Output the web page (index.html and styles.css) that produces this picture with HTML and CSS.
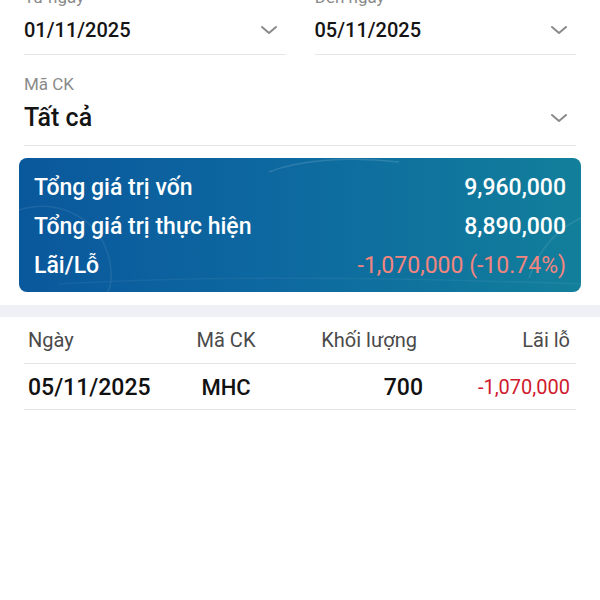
FILE: index.html
```html
<!DOCTYPE html>
<html lang="vi">
<head>
<meta charset="utf-8">
<link rel="stylesheet" href="styles.css">
</head>
<body>
<div class="page">
  <div class="filters">
    <div class="row2">
      <div class="field">
        <div class="label">Từ ngày</div>
        <div class="control">
          <span class="value">01/11/2025</span>
          <svg class="chev" width="18" height="10" viewBox="0 0 18 10"><path d="M2 2l7 6 7-6" fill="none" stroke="#8a8a8a" stroke-width="2" stroke-linecap="round" stroke-linejoin="round"/></svg>
        </div>
      </div>
      <div class="field">
        <div class="label">Đến ngày</div>
        <div class="control">
          <span class="value">05/11/2025</span>
          <svg class="chev" width="18" height="10" viewBox="0 0 18 10"><path d="M2 2l7 6 7-6" fill="none" stroke="#8a8a8a" stroke-width="2" stroke-linecap="round" stroke-linejoin="round"/></svg>
        </div>
      </div>
    </div>
    <div class="field full">
      <div class="label">Mã CK</div>
      <div class="control big">
        <span class="value">Tất cả</span>
        <svg class="chev" width="18" height="10" viewBox="0 0 18 10"><path d="M2 2l7 6 7-6" fill="none" stroke="#8a8a8a" stroke-width="2" stroke-linecap="round" stroke-linejoin="round"/></svg>
      </div>
    </div>
  </div>

  <div class="card">
    <svg class="deco" width="562" height="134" viewBox="0 0 562 134">
      <path d="M250 14 C280 2 330 -2 380 4" fill="none" stroke="#ffffff" stroke-opacity="0.13" stroke-width="1.5"/>
      <path d="M0 52 C40 40 80 60 90 100 C95 120 90 134 88 134" fill="none" stroke="#ffffff" stroke-opacity="0.08" stroke-width="1.5"/>
      <path d="M562 60 C540 70 520 90 510 120" fill="none" stroke="#ffffff" stroke-opacity="0.1" stroke-width="1.5"/>
      <path d="M40 126 C180 118 340 118 562 126" fill="none" stroke="#ffffff" stroke-opacity="0.05" stroke-width="1.5"/>
    </svg>
    <div class="crow"><span>Tổng giá trị vốn</span><span>9,960,000</span></div>
    <div class="crow"><span>Tổng giá trị thực hiện</span><span>8,890,000</span></div>
    <div class="crow"><span>Lãi/Lỗ</span><span class="loss">-1,070,000 (-10.74%)</span></div>
  </div>

  <div class="band"></div>

  <div class="table">
    <div class="trow head">
      <span class="c1">Ngày</span>
      <span class="c2">Mã CK</span>
      <span class="c3">Khối lượng</span>
      <span class="c4">Lãi lỗ</span>
    </div>
    <div class="trow body">
      <span class="c1">05/11/2025</span>
      <span class="c2">MHC</span>
      <span class="c3">700</span>
      <span class="c4 red">-1,070,000</span>
    </div>
  </div>
</div>
</body>
</html>
```

FILE: styles.css
```css
* { box-sizing: border-box; }
html, body { margin: 0; padding: 0; background: #ffffff; }
body {
  font-family: Roboto, "Noto Sans", "Liberation Sans", sans-serif;
  color: #111111;
  width: 600px;
  height: 600px;
  overflow: hidden;
}
.page { margin-top: -12px; }

.filters { padding: 0 24px; }
.row2 {
  display: grid;
  grid-template-columns: 1fr 1fr;
  column-gap: 29px;
  margin-bottom: 20px;
}
.label {
  font-size: 17px;
  line-height: 18px;
  color: #8a8a8a;
}
.control {
  margin-top: 12px;
  display: flex;
  align-items: center;
  justify-content: space-between;
  padding: 0 8px 12px 0;
  border-bottom: 1px solid #e6e6e6;
}
.value {
  font-size: 20px;
  line-height: 24px;
  font-weight: 500;
  color: #141414;
}
.control.big {
  margin-top: 11px;
  padding-bottom: 13px;
}
.control.big .value {
  font-size: 25px;
  line-height: 28px;
}
.chev { display: block; }

.card {
  position: relative;
  overflow: hidden;
  margin: 12px 19px 0;
  height: 134px;
  padding: 10px 15px 7px;
  border-radius: 8px;
  background: linear-gradient(90deg, #0a589c 0%, #0d68a0 45%, #127f9b 100%);
  color: #ffffff;
}
.deco { position: absolute; left: 0; top: 0; }
.crow {
  position: relative;
  display: flex;
  justify-content: space-between;
  font-size: 23px;
  line-height: 39px;
  font-weight: 500;
}
.loss { color: #f2857f; font-weight: 400; }

.band {
  margin-top: 13px;
  height: 12px;
  background: #eef0f5;
}

.table { padding: 0 24px; }
.trow {
  display: grid;
  grid-template-columns: 148px 100px 147px 147px;
  padding: 0 6px 0 4px;
  border-bottom: 1px solid #e4e4e4;
}
.trow.head {
  padding-top: 11px;
  padding-bottom: 11px;
  font-size: 20px;
  line-height: 24px;
  color: #4a4a4a;
}
.trow.head .c3 { padding-right: 6px; }
.trow.body {
  padding-top: 10px;
  padding-bottom: 8px;
  font-size: 23px;
  line-height: 27px;
  font-weight: 500;
  color: #111111;
}
.trow.body .c2 { font-size: 22px; }
.c1 { text-align: left; }
.c2 { text-align: center; }
.c3 { text-align: right; }
.c4 { text-align: right; }
.red { color: #d01a2e; font-weight: 400; font-size: 20px; }
```
